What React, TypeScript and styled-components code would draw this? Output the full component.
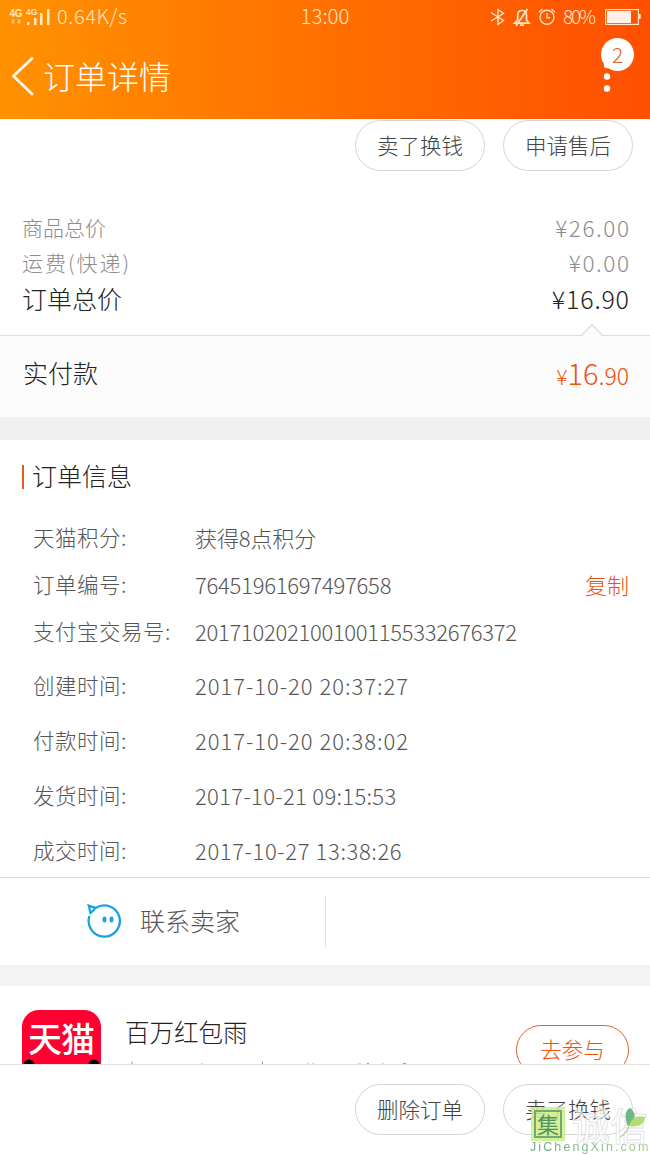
import React from 'react';
import styled, { createGlobalStyle } from 'styled-components';

const Global = createGlobalStyle`
  * { box-sizing: border-box; }
  html, body { margin: 0; padding: 0; }
  body { background: #fff; font-family: "Noto Sans CJK SC", sans-serif; font-weight: 300; }
`;

const Screen = styled.div`
  position: relative;
  width: 650px;
  height: 1155px;
  display: flex;
  flex-direction: column;
  overflow: hidden;
  background: #fff;
`;

const Text = styled.span<{ $size: number; $track?: number; $color?: string; $weight?: number }>`
  font-size: ${p => p.$size}px;
  letter-spacing: ${p => p.$track ?? 0}px;
  margin-right: ${p => -(p.$track ?? 0)}px;
  padding-bottom: 3px;
  color: ${p => p.$color ?? '#555'};
  font-weight: ${p => p.$weight ?? 300};
  line-height: 1;
  white-space: pre;
`;

const Header = styled.header`
  flex: none;
  height: 119px;
  background: linear-gradient(90deg, #ff9200 0%, #ff7000 50%, #ff4f00 100%);
`;

const StatusBar = styled.div`
  height: 34px;
  display: grid;
  grid-template-columns: 1fr auto 1fr;
  align-items: center;
  padding: 0 9px 0 9px;
`;

const StatusGroup = styled.div<{ $end?: boolean; $gap: number }>`
  display: flex;
  align-items: center;
  gap: ${p => p.$gap}px;
  justify-content: ${p => (p.$end ? 'flex-end' : 'flex-start')};
`;

const TitleBar = styled.div`
  height: 85px;
  display: flex;
  align-items: center;
  padding: 0 37px 0 11px;
`;

const TitleText = styled.h1`
  flex: 1;
  margin: 0 0 0 9px;
  padding-bottom: 4px;
  font-size: 32px;
  line-height: 1;
  font-weight: 300;
  color: #fff;
`;

const Menu = styled.div`
  position: relative;
  width: 12px;
  height: 34px;
`;

const Badge = styled.span`
  position: absolute;
  left: 0;
  top: -22px;
  width: 33px;
  height: 33px;
  border-radius: 50%;
  background: #fff;
  color: #e0602c;
  font-size: 21px;
  line-height: 32px;
  text-align: center;
`;

const ActionRow = styled.div`
  flex: none;
  height: 92px;
  display: flex;
  justify-content: flex-end;
  align-items: flex-start;
  gap: 18px;
  padding: 1px 17px 0 0;
`;

const PillButton = styled.button<{ $accent?: boolean }>`
  width: ${p => (p.$accent ? 113 : 130)}px;
  height: ${p => (p.$accent ? 50 : 51)}px;
  flex: none;
  border: 1px solid ${p => (p.$accent ? '#e0602c' : '#d4d4d4')};
  border-radius: 26px;
  background: #fff;
  padding: 0 0 2px;
  font-family: inherit;
  font-weight: 300;
  font-size: 21.5px;
  line-height: 1;
  color: ${p => (p.$accent ? '#f0500a' : '#444')};
`;

const Prices = styled.section`
  flex: none;
  height: 124px;
  padding: 0 21px 0 22px;
`;

const Line = styled.div<{ $h: number }>`
  height: ${p => p.$h}px;
  display: flex;
  align-items: center;
  justify-content: space-between;
`;

const Paid = styled.section`
  position: relative;
  flex: none;
  height: 82px;
  border-top: 1px solid #dedede;
  background: #fcfcfc;
  display: flex;
  align-items: center;
  justify-content: space-between;
  padding: 0 21px 6px 23px;
`;

const Notch = styled.svg`
  position: absolute;
  right: 45px;
  top: -13px;
`;

const Amount = styled.span`
  display: flex;
  align-items: baseline;
`;

const Gap = styled.div<{ $h: number; $c: string }>`
  flex: none;
  height: ${p => p.$h}px;
  background: ${p => p.$c};
`;

const Info = styled.section`
  flex: none;
  height: 437px;
  padding-top: 22px;
`;

const Heading = styled.h2`
  display: flex;
  align-items: center;
  height: 30px;
  margin: 0 0 23px 22px;
  padding: 0;
  line-height: 1;
  gap: 8px;
`;

const HeadingBar = styled.i`
  width: 2px;
  height: 24px;
  background: #e8591c;
`;

const InfoRow = styled.div<{ $h: number; $apart?: boolean }>`
  height: ${p => p.$h}px;
  margin-top: ${p => (p.$apart ? 4 : 0)}px;
  display: grid;
  grid-template-columns: 162px 1fr auto;
  align-items: center;
  padding: 0 21px 0 33px;
`;

const Contact = styled.section`
  flex: none;
  height: 88px;
  border-top: 1px solid #d9d9d9;
  display: grid;
  grid-template-columns: 326px 1fr;
  align-items: center;
`;

const ContactCell = styled.div`
  height: 51px;
  border-right: 1px solid #e2e2e2;
  display: flex;
  align-items: center;
  gap: 18px;
  padding-left: 85px;
`;

const Promo = styled.section`
  flex: none;
  height: 78px;
  overflow: hidden;
  display: flex;
  align-items: flex-start;
  padding: 24px 21px 0 22px;
`;

const TmallTile = styled.div`
  position: relative;
  flex: none;
  width: 79px;
  height: 79px;
  border-radius: 17px;
  background: #ff0030;
  overflow: hidden;
  display: flex;
  justify-content: center;
  padding-top: 11px;
`;

const Ears = styled.svg`
  position: absolute;
  left: 0;
  top: 49px;
`;

const PromoCopy = styled.div`
  flex: 1;
  display: flex;
  flex-direction: column;
  padding: 10px 0 0 24px;
`;

const Slivers = styled.svg`
  margin: 12px 0 0 0;
`;

const JoinSlot = styled.div`
  padding-top: 15px;
`;

const Footer = styled.footer`
  flex: none;
  height: 91px;
  border-top: 1px solid #e2e2e2;
  background: #fff;
  display: flex;
  justify-content: flex-end;
  gap: 18px;
  padding: 19px 17px 0 0;
`;

const Watermark = styled.div`
  position: absolute;
  right: 0;
  bottom: 0;
  width: 120px;
  height: 49px;
`;

const SealRow = styled.div`
  display: flex;
  align-items: center;
  height: 35px;
`;

const Seal = styled.span`
  width: 34px;
  height: 34px;
  margin: 0 7px 0 1px;
  background: rgba(205, 238, 135, 0.85);
  padding: 3px;
  flex: none;
  span {
    display: block;
    width: 28px;
    height: 28px;
    border: 2px solid #72ab72;
    font-size: 22px;
    font-weight: 400;
    line-height: 22px;
    text-align: center;
    color: #4f9360;
  }
`;

const Ghost = styled.span`
  font-size: 38px;
  line-height: 34px;
  font-weight: 500;
  color: rgba(255, 255, 255, 0.6);
  -webkit-text-stroke: 0.8px #e2dce2;
`;

const Leaf = styled.svg`
  position: absolute;
  right: 3px;
  top: 0;
`;

const Site = styled.span`
  display: block;
  font-family: "Liberation Sans", sans-serif;
  font-weight: 400;
  font-size: 12.5px;
  line-height: 13px;
  letter-spacing: 2.1px;
  white-space: nowrap;
  background: linear-gradient(90deg, #62a884, #a2cf85);
  -webkit-background-clip: text;
  color: transparent;
`;

const cream = '#ffe6c4';

const SignalIcon = () => (
  <svg width="42" height="20" viewBox="0 0 42 20">
    <g fill={cream} fontFamily="Liberation Sans" fontWeight="700">
      <text x="0.5" y="10" fontSize="10" letterSpacing="-0.2">4G</text>
      <text x="17" y="8" fontSize="8.5" letterSpacing="0">4G</text>
    </g>
    <g fill={cream}>
      <rect x="18" y="15" width="2.5" height="3" />
      <rect x="25" y="11" width="2.5" height="7" />
      <rect x="31" y="6" width="2.5" height="12" />
      <rect x="38" y="2" width="2.5" height="16" />
    </g>
    <g fill="#ffc476">
      <path d="M2 14l2-2 2 2-2 1zM2 15h4l-2 2zM8 14l2-2 2 2-2 1zM8 15h4l-2 2z" />
    </g>
  </svg>
);

const BluetoothIcon = () => (
  <svg width="16" height="18" viewBox="0 0 16 18" fill="none" stroke={cream} strokeWidth="1.4">
    <path d="M1 4.5L13.5 12.5L8 16.5V1.5L13.5 5.5L1 13" />
  </svg>
);

const MuteBellIcon = () => (
  <svg width="18" height="19" viewBox="0 0 18 19" fill="none" stroke={cream} strokeWidth="1.7">
    <path d="M1.5 15.2H16L13.5 12V7C13.5 3.8 11.5 2.5 9 2.5C6.5 2.5 4.7 4 4.7 7V12Z" />
    <path d="M3 18L14.5 1M7 17.2H11" />
  </svg>
);

const AlarmIcon = () => (
  <svg width="18" height="18" viewBox="0 0 18 18" fill="none" stroke={cream} strokeWidth="1.4">
    <circle cx="9" cy="9.3" r="7" />
    <path d="M9 5V9.7H12M1 4.2L4.5 1M17 4.2L13.5 1" />
  </svg>
);

const BatteryIcon = () => (
  <svg width="36" height="16" viewBox="0 0 36 16">
    <rect x="0.6" y="0.6" width="32.8" height="14.8" fill="none" stroke={cream} strokeWidth="1.2" />
    <rect x="2" y="2" width="24" height="12" fill="#fff0e8" />
    <rect x="34" y="5" width="1.7" height="5" fill={cream} />
  </svg>
);

const BackIcon = () => (
  <svg width="23" height="40" viewBox="0 0 23 40" fill="none" stroke="#fff8ea" strokeWidth="2.8">
    <path d="M21 1.5L2.5 19L21 37" strokeLinecap="round" />
  </svg>
);

const SellerIcon = () => (
  <svg width="37" height="37" viewBox="0 0 37 37" fill="none" stroke="#1ba0e1" strokeWidth="2.3">
    <path d="M4.5 13A15.6 15.6 0 1 0 11 4.8C8.8 4.9 6.5 3.5 3.8 2.7C4.6 5 4.6 7.3 5.5 10L10 6" />
    <ellipse cx="19.5" cy="16.5" rx="2" ry="3" fill="#1ba0e1" stroke="none" />
    <ellipse cx="26.5" cy="16.5" rx="2" ry="3" fill="#1ba0e1" stroke="none" />
  </svg>
);

const details = [
  { label: '天猫积分:', value: '获得8点积分', h: 47, track: -0.1 },
  { label: '订单编号:', value: '76451961697497658', h: 47, track: -0.23, copy: true },
  { label: '支付宝交易号:', value: '2017102021001001155332676372', h: 46, track: -0.28 },
  { label: '创建时间:', value: '2017-10-20 20:37:27', h: 55, track: 0.98, apart: true },
  { label: '付款时间:', value: '2017-10-20 20:38:02', h: 55, track: 0.98 },
  { label: '发货时间:', value: '2017-10-21 09:15:53', h: 55, track: 0.33 },
  { label: '成交时间:', value: '2017-10-27 13:38:26', h: 55, track: 0.63 },
];

export default function App() {
  return (
    <Screen>
      <Global />
      <Header>
        <StatusBar>
          <StatusGroup $gap={6}>
            <SignalIcon />
            <Text $size={20} $color={cream} $track={0.6}>0.64K/s</Text>
          </StatusGroup>
          <Text $size={20.5} $color={cream} $track={0}>13:00</Text>
          <StatusGroup $gap={7} $end>
            <BluetoothIcon />
            <MuteBellIcon />
            <AlarmIcon />
            <Text $size={19} $color={cream} $track={-2.2}>80% </Text>
            <BatteryIcon />
          </StatusGroup>
        </StatusBar>
        <TitleBar>
          <BackIcon />
          <TitleText>订单详情</TitleText>
          <Menu>
            <svg width="12" height="34" viewBox="0 0 12 34" fill="#fff">
              <circle cx="6" cy="5" r="3.2" />
              <circle cx="6" cy="16.5" r="3.2" />
              <circle cx="6" cy="28.5" r="3.2" />
            </svg>
            <Badge>2</Badge>
          </Menu>
        </TitleBar>
      </Header>

      <ActionRow>
        <PillButton>卖了换钱</PillButton>
        <PillButton>申请售后</PillButton>
      </ActionRow>

      <Prices>
        <Line $h={35}>
          <Text $size={21} $color="#8c8c8c">商品总价</Text>
          <Text $size={22.5} $color="#8c8c8c" $track={1.6}>¥26.00</Text>
        </Line>
        <Line $h={35}>
          <Text $size={21} $color="#8c8c8c" $track={2}>运费(快递)</Text>
          <Text $size={22.5} $color="#8c8c8c" $track={1.6}>¥0.00</Text>
        </Line>
        <Line $h={38}>
          <Text $size={25} $color="#222">订单总价</Text>
          <Text $size={25} $color="#222" $track={0.8}>¥16.90</Text>
        </Line>
      </Prices>

      <Paid>
        <Notch width="26" height="14" viewBox="0 0 26 14">
          <path d="M2 13L13 1.5L24 13V14H2Z" fill="#fcfcfc" />
          <path d="M2 13L13 1.5L24 13" fill="none" stroke="#dedede" strokeWidth="1.5" />
        </Notch>
        <Text $size={25} $color="#222">实付款</Text>
        <Amount>
          <Text $size={21} $color="#f0500a">¥</Text>
          <Text $size={29} $color="#f0500a">16</Text>
          <Text $size={23} $color="#f0500a">.90</Text>
        </Amount>
      </Paid>

      <Gap $h={23} $c="#f0f0f0" />

      <Info>
        <Heading>
          <HeadingBar />
          <Text $size={25} $color="#222">订单信息</Text>
        </Heading>
        {details.map(d => (
          <InfoRow key={d.label} $h={d.h} $apart={d.apart}>
            <Text $size={21.5} $track={0.5}>{d.label}</Text>
            <Text $size={22} $track={d.track}>{d.value}</Text>
            {d.copy && <Text $size={22} $color="#f0500a">复制</Text>}
          </InfoRow>
        ))}
      </Info>

      <Contact>
        <ContactCell>
          <SellerIcon />
          <Text $size={25} $color="#555">联系卖家</Text>
        </ContactCell>
      </Contact>

      <Gap $h={21} $c="#f3f3f3" />

      <Promo>
        <TmallTile>
          <Text $size={34} $color="#fff" $weight={500} $track={-1}>天猫</Text>
          <Ears width="79" height="10" viewBox="0 0 79 10">
            <circle cx="7" cy="6" r="5.5" />
            <circle cx="72" cy="6" r="5.5" />
          </Ears>
        </TmallTile>
        <PromoCopy>
          <Text $size={24.5} $color="#222">百万红包雨</Text>
          <Slivers width="300" height="5" viewBox="0 0 300 5" stroke="#999" fill="none">
            <path d="M7 1.5V4M137.500 1.500V4M242 3.500h2M278 3.500h3" />
            <path stroke="#d2d2d2" d="M76 3.500h2M182 3.500h2M187 3.500h2M233 3.500h3M257 3.500h2" />
          </Slivers>
        </PromoCopy>
        <JoinSlot>
          <PillButton $accent>去参与</PillButton>
        </JoinSlot>
      </Promo>

      <Footer>
        <PillButton>删除订单</PillButton>
        <PillButton>卖了换钱</PillButton>
      </Footer>

      <Watermark>
        <SealRow>
          <Seal><span>集</span></Seal>
          <Ghost>诚信</Ghost>
        </SealRow>
        <Leaf width="28" height="34" viewBox="0 0 28 34">
          <path d="M9 20C5 12 6 4 11 2C18 7 17 15 9 20Z" fill="#6fb884" />
          <path d="M10 20C12 12 18 9 26 11C26 18 19 22 10 20Z" fill="#b0de72" />
          <path d="M10 19C9 25 5 29 1 31" fill="none" stroke="#a6cf86" strokeWidth="1.3" />
        </Leaf>
        <Site>JiChengXin.com</Site>
      </Watermark>
    </Screen>
  );
}
